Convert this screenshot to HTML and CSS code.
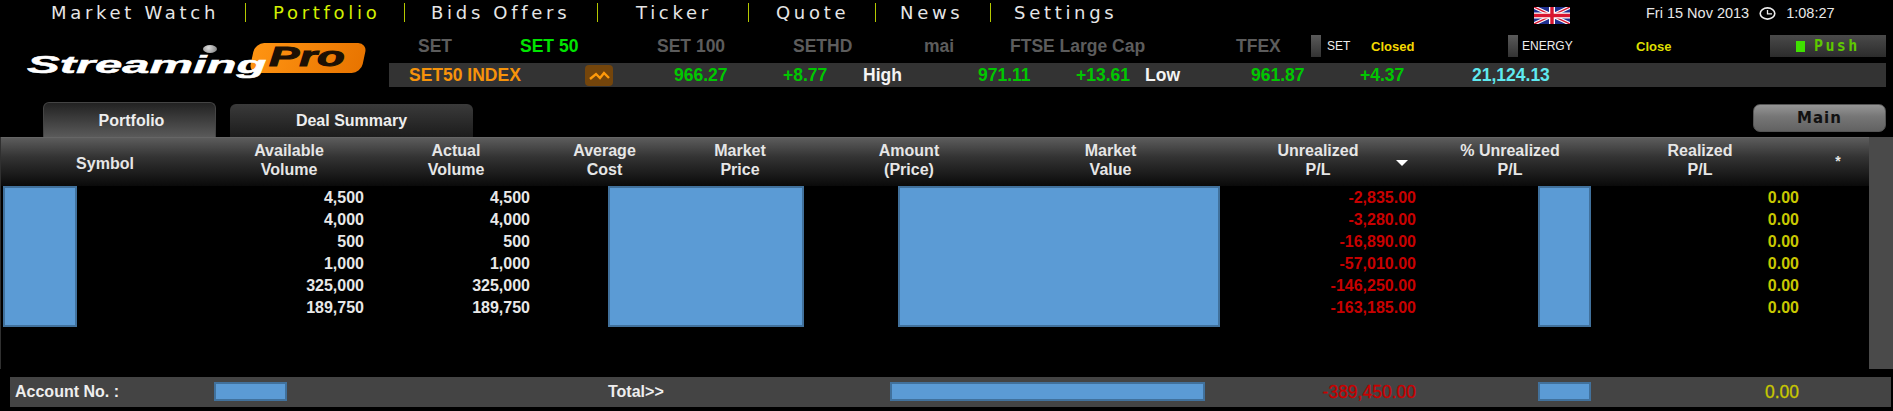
FILE: index.html
```html
<!DOCTYPE html>
<html lang="en">
<head>
    <meta charset="UTF-8">
    <meta name="viewport" content="width=device-width, initial-scale=1.0">
    <title>Streaming Pro - Portfolio</title>
    <link rel="stylesheet" href="styles.css">
</head>
<body>
    <div class="top-bar">
        <nav class="main-nav">
            <a>Market Watch</a><i></i>
            <a class="active">Portfolio</a><i></i>
            <a>Bids Offers</a><i></i>
            <a>Ticker</a><i></i>
            <a>Quote</a><i></i>
            <a>News</a><i></i>
            <a>Settings</a>
        </nav>
        <svg class="flag" viewBox="0 0 36 17">
            <rect width="36" height="17" fill="#1f2f8f"/>
            <path d="M0 0L36 17M36 0L0 17" stroke="#fff" stroke-width="3.6"/>
            <path d="M0 0L36 17M36 0L0 17" stroke="#d8152f" stroke-width="1.4"/>
            <path d="M18 0V17M0 8.5H36" stroke="#fff" stroke-width="6"/>
            <path d="M18 0V17M0 8.5H36" stroke="#d8152f" stroke-width="3.4"/>
        </svg>
        <div class="clock-box">
            <span class="date">Fri 15 Nov 2013</span>
            <svg class="clock" viewBox="0 0 17 13">
                <ellipse cx="8.5" cy="6.5" rx="7.3" ry="5.6" fill="none" stroke="#eee" stroke-width="1.6"/>
                <path d="M8.5 3V6.8H13" fill="none" stroke="#eee" stroke-width="1.3"/>
            </svg>
            <span>1:08:27</span>
        </div>
    </div>

    <div class="brand-row">
        <div class="logo">
            <div class="logo-badge"></div>
            <span class="logo-pro">Pro</span>
            <span class="logo-ball"></span>
            <span class="logo-text">Streaming</span>
        </div>
        <div class="market-panel">
            <div class="market-tabs">
                <span>SET</span>
                <span class="on">SET 50</span>
                <span>SET 100</span>
                <span>SETHD</span>
                <span>mai</span>
                <span>FTSE Large Cap</span>
                <span>TFEX</span>
                <b class="light"></b>
                <em class="board">SET</em>
                <em class="status">Closed</em>
                <b class="light"></b>
                <em class="board">ENERGY</em>
                <em class="status close">Close</em>
                <div class="push-btn"><s></s>Push</div>
            </div>
            <div class="ticker">
                <span class="orange">SET50 INDEX</span>
                <svg class="graph-icon" viewBox="0 0 28 21">
                    <rect width="28" height="21" rx="4" fill="#74450b"/>
                    <path d="M5 14L11 9L15 13L19 8L24 13" fill="none" stroke="#ff9a0a" stroke-width="2.4"/>
                </svg>
                <span class="green">966.27</span>
                <span class="green">+8.77</span>
                <span class="white">High</span>
                <span class="green">971.11</span>
                <span class="green">+13.61</span>
                <span class="white">Low</span>
                <span class="green">961.87</span>
                <span class="green">+4.37</span>
                <span class="cyan">21,124.13</span>
            </div>
        </div>
    </div>

    <div class="tab-row">
        <div class="tab active">Portfolio</div>
        <div class="tab deal">Deal Summary</div>
        <div class="main-btn">Main</div>
    </div>

    <div class="table-area">
        <div class="table">
            <div class="grid-row head">
                <div class="single">Symbol</div>
                <div>Available<br>Volume</div>
                <div>Actual<br>Volume</div>
                <div>Average<br>Cost</div>
                <div>Market<br>Price</div>
                <div>Amount<br>(Price)</div>
                <div>Market<br>Value</div>
                <div class="sorted">Unrealized<br>P/L<span class="sort-arrow"></span></div>
                <div>% Unrealized<br>P/L</div>
                <div>Realized<br>P/L</div>
                <div class="star">*</div>
            </div>
            <div class="rows">
                <div class="grid-row"><div></div><div class="vol1">4,500</div><div class="vol2">4,500</div><div></div><div></div><div></div><div></div><div class="loss">-2,835.00</div><div></div><div class="real">0.00</div><div></div></div>
                <div class="grid-row"><div></div><div class="vol1">4,000</div><div class="vol2">4,000</div><div></div><div></div><div></div><div></div><div class="loss">-3,280.00</div><div></div><div class="real">0.00</div><div></div></div>
                <div class="grid-row"><div></div><div class="vol1">500</div><div class="vol2">500</div><div></div><div></div><div></div><div></div><div class="loss">-16,890.00</div><div></div><div class="real">0.00</div><div></div></div>
                <div class="grid-row"><div></div><div class="vol1">1,000</div><div class="vol2">1,000</div><div></div><div></div><div></div><div></div><div class="loss">-57,010.00</div><div></div><div class="real">0.00</div><div></div></div>
                <div class="grid-row"><div></div><div class="vol1">325,000</div><div class="vol2">325,000</div><div></div><div></div><div></div><div></div><div class="loss">-146,250.00</div><div></div><div class="real">0.00</div><div></div></div>
                <div class="grid-row"><div></div><div class="vol1">189,750</div><div class="vol2">189,750</div><div></div><div></div><div></div><div></div><div class="loss">-163,185.00</div><div></div><div class="real">0.00</div><div></div></div>
                <!-- blanked out columns -->
                <div class="mask mask-symbol"></div>
                <div class="mask mask-price"></div>
                <div class="mask mask-value"></div>
                <div class="mask mask-pct"></div>
            </div>
        </div>
        <div class="side-bar"></div>
    </div>

    <div class="summary">
        <div class="account">Account No. :</div>
        <div class="blank"></div>
        <div></div>
        <div>Total&gt;&gt;</div>
        <div class="blank"></div>
        <div class="total-loss">-389,450.00</div>
        <div></div>
        <div class="blank"></div>
        <div class="total-real">0.00</div>
    </div>
</body>
</html>
```

FILE: styles.css
```css
html, body {
    margin: 0;
    height: 411px;
    overflow: hidden;
    background-color: #000;
    color: #eee;
    font-family: "Liberation Sans", Arial, sans-serif;
}

/* top line */
.top-bar {
    display: flex;
    height: 35px;
}
.main-nav {
    display: grid;
    grid-template-columns: 194px 28px 131px 27px 166px 39px 112px 28px 99px 25px 90px 24px 110px;
    align-items: start;
    margin-left: 51px;
    font-family: "DejaVu Sans", sans-serif;
    font-size: 18px;
    letter-spacing: 3.7px;
    line-height: 26px;
    color: #e6e6e6;
}
.main-nav a.active {
    color: #d4f000;
}
.main-nav i {
    display: block;
    width: 1px;
    height: 19px;
    margin-top: 3px;
    background-color: #b4c800;
}
.flag {
    width: 36px;
    height: 17px;
    margin: 7px 0 0 410px;
}
.clock-box {
    display: flex;
    align-items: center;
    height: 26px;
    margin-left: 76px;
    font-size: 14.5px;
    color: #e8e8e8;
}
.clock {
    width: 17px;
    height: 13px;
    margin: 0 10px 0 10px;
}

/* logo + market panel */
.brand-row {
    display: flex;
    height: 52px;
}
.logo {
    position: relative;
    width: 389px;
    flex-shrink: 0;
}
.logo-badge {
    position: absolute;
    left: 252px;
    top: 8px;
    width: 112px;
    height: 30px;
    border-radius: 9px;
    background: linear-gradient(100deg, #ff9412, #e87400);
    transform: skewX(-12deg);
}
.logo-pro {
    position: absolute;
    left: 269px;
    top: 7px;
    font-size: 27px;
    line-height: 31px;
    font-weight: bold;
    font-style: italic;
    color: #1c1004;
    -webkit-text-stroke: 1px #1c1004;
    transform: scaleX(1.68);
    transform-origin: left center;
}
.logo-ball {
    position: absolute;
    left: 203px;
    top: 10px;
    width: 14px;
    height: 8px;
    border-radius: 50%;
    background: radial-gradient(circle at 40% 35%, #ddd, #777);
}
.logo-text {
    position: absolute;
    left: 27px;
    top: 16px;
    font-size: 24px;
    line-height: 27px;
    font-weight: bold;
    font-style: italic;
    color: #fff;
    -webkit-text-stroke: 0.5px #fff;
    transform: scaleX(2.04);
    transform-origin: left center;
}
.market-panel {
    width: 1497px;
}
.market-tabs {
    display: grid;
    grid-template-columns: 102px 137px 136px 131px 86px 226px 75px 16px 44px 137px 14px 114px 134px 116px;
    align-items: center;
    height: 28px;
    padding: 0 0 6px 29px;
    box-sizing: border-box;
    font-size: 17.5px;
    font-weight: bold;
    color: #5c5c5c;
}
.market-tabs .on {
    color: #00e400;
}
.market-tabs .light {
    display: block;
    width: 10px;
    height: 22px;
    background: linear-gradient(#5a5a5a, #333);
}
.market-tabs em {
    font-style: normal;
}
.market-tabs .board {
    font-size: 12px;
    font-weight: normal;
    color: #eee;
}
.market-tabs .status {
    font-size: 13px;
    color: #f5d800;
}
.market-tabs .close {
    color: #dede00;
}
.push-btn {
    display: flex;
    align-items: center;
    height: 22px;
    padding-left: 26px;
    background: linear-gradient(#4a4a4a, #2c2c2c);
    font-family: "DejaVu Sans Mono", monospace;
    font-size: 15px;
    font-weight: bold;
    letter-spacing: 2.4px;
    color: #5fc800;
}
.push-btn s {
    width: 9px;
    height: 11px;
    margin-right: 9px;
    background-color: #3fe000;
}
.ticker {
    display: grid;
    grid-template-columns: 176px 89px 109px 80px 115px 98px 69px 106px 109px 112px auto;
    align-items: center;
    height: 24px;
    padding-left: 20px;
    background-color: #333;
    font-size: 17.5px;
    font-weight: bold;
}
.graph-icon {
    width: 28px;
    height: 21px;
}
.orange { color: #f7930a; }
.green { color: #00c800; }
.white { color: #f4f4f4; }
.cyan { color: #5feaf0; }

/* tabs */
.tab-row {
    display: flex;
    align-items: flex-end;
    height: 50px;
    padding-left: 43px;
}
.tab {
    box-sizing: border-box;
    height: 35px;
    line-height: 35px;
    border-radius: 6px 6px 0 0;
    text-align: center;
    font-size: 16px;
    font-weight: bold;
}
.tab.active {
    width: 173px;
    padding-left: 4px;
    border: 1px solid #444;
    border-bottom: none;
    background: linear-gradient(#222, #5a5a5a);
}
.tab.deal {
    width: 243px;
    height: 33px;
    line-height: 33px;
    margin-left: 14px;
    background: linear-gradient(#3a3a3a, #1c1c1c);
}
.main-btn {
    box-sizing: border-box;
    width: 133px;
    height: 28px;
    margin: 0 7px 5px auto;
    border-radius: 7px;
    border: 1px solid #555;
    background: linear-gradient(#959595, #767676 45%, #626262);
    text-align: center;
    line-height: 26px;
    font-family: "DejaVu Sans", sans-serif;
    font-size: 15px;
    font-weight: bold;
    letter-spacing: 1px;
    color: #111;
}

/* table */
.table-area {
    display: flex;
    height: 232px;
    border-left: 1px solid #303030;
}
.table {
    width: 1868px;
}
.side-bar {
    flex: 1;
    background-color: #4a4a4a;
}
.grid-row {
    display: grid;
    grid-template-columns: 208px 160px 174px 123px 148px 190px 213px 202px 182px 198px 70px;
    height: 22px;
    line-height: 22px;
    font-size: 16px;
    font-weight: bold;
    text-align: right;
}
.grid-row.head {
    align-items: center;
    height: 49px;
    padding-bottom: 5px;
    line-height: 19px;
    text-align: center;
    color: #e6e6e6;
    background: linear-gradient(#5c5c5c, #333 40%, #0a0a0a);
    border-top: 1px solid #666;
    box-sizing: border-box;
}
.single {
    padding-top: 7px;
}
.sorted {
    position: relative;
}
.sort-arrow {
    position: absolute;
    left: 179px;
    top: 19px;
    border-left: 6px solid transparent;
    border-right: 6px solid transparent;
    border-top: 6px solid #fff;
}
.star {
    padding: 3px 0 0 8px;
    font-size: 14px;
}
.rows {
    position: relative;
    height: 183px;
    box-sizing: border-box;
    padding-top: 1px;
}
.vol1 { padding-right: 5px; color: #e8e8e8; }
.vol2 { padding-right: 13px; color: #e8e8e8; }
.loss { padding-right: 3px; color: #c80000; }
.real { color: #c8c800; }
.mask {
    position: absolute;
    top: 0;
    height: 141px;
    box-sizing: border-box;
    border: 2px solid #41719c;
    background-color: #5b9bd5;
}
.mask-symbol { left: 2px; width: 74px; }
.mask-price { left: 607px; width: 196px; }
.mask-value { left: 897px; width: 322px; }
.mask-pct { left: 1537px; width: 53px; }

/* total bar */
.summary {
    display: grid;
    grid-template-columns: 204px 73px 321px 282px 315px 211px 122px 53px 208px;
    align-items: center;
    width: 1881px;
    height: 30px;
    margin: 8px 0 0 10px;
    background-color: #444;
    font-size: 16px;
    font-weight: bold;
}
.account {
    padding-left: 5px;
}
.blank {
    box-sizing: border-box;
    height: 19px;
    margin-bottom: 1px;
    border: 2px solid #41719c;
    background-color: #5b9bd5;
}
.total-loss {
    text-align: right;
    font-size: 17.5px;
    font-weight: normal;
    -webkit-text-stroke: 0.3px #c80000;
    color: #c80000;
}
.total-real {
    text-align: right;
    font-size: 17.5px;
    font-weight: normal;
    -webkit-text-stroke: 0.3px #c8c800;
    color: #c8c800;
}
```
